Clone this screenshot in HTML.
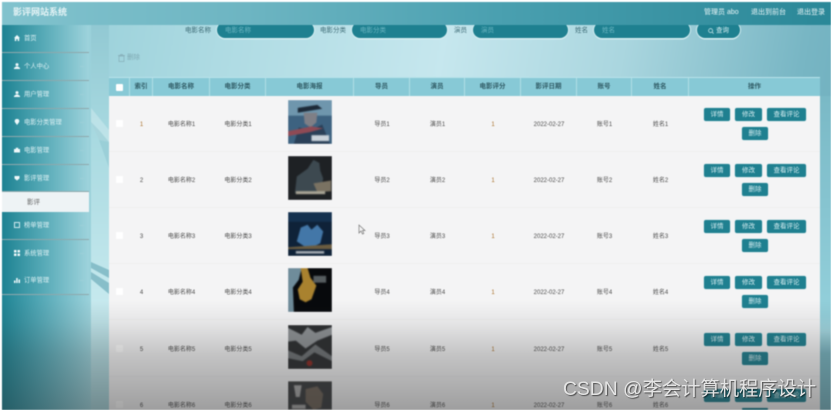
<!DOCTYPE html>
<html lang="zh"><head><meta charset="utf-8"><title>影评网站系统</title>
<style>
*{box-sizing:border-box;margin:0;padding:0}
html,body{width:831px;height:410px;overflow:hidden;background:#fff}
body{position:relative;font-family:"Liberation Sans","Noto Sans CJK SC",sans-serif;font-size:6.5px;color:#4a4a4a}
div,span{position:absolute}
svg{display:block}
#wrap{left:2px;top:2px;width:829px;height:408px;overflow:hidden;filter:blur(.45px)}
#app{left:-2px;top:-2px;width:831px;height:410px;overflow:hidden;background:linear-gradient(100deg,#8fcbd5 0%,#aedbe3 25%,#c6e7ee 50%,#aad6df 70%,#78b6c4 90%,#6cadbc 100%)}
#hd{left:0;top:0;width:831px;height:25px;background:linear-gradient(90deg,#82c3ce 0%,#6db5c2 30%,#4aa0b0 60%,#2b8898 100%)}
#hd span{color:#eaf6f8;white-space:nowrap;top:9px;font-size:7px;line-height:8px}
#hd .t{left:13px;top:7px;font-size:9px;line-height:11px;font-weight:bold;color:#e6f4f6}
.strip{left:91px;top:25px;width:18px;height:385px;background:linear-gradient(180deg,#92c9d3 0%,#a9dae1 30%,#c6e9ee 72%,#a5d3da 100%)}
.rs{left:820px;top:96px;width:11px;height:314px;background:linear-gradient(180deg,#7ab9c6 0%,#93d0db 70%,#a2d6df 75%,#79b6c2 82%,#79b6c2 100%)}
.sbg{left:2px;top:25px;width:89px;height:385px;background:linear-gradient(90deg,#1f8494 0%,#4fa5b3 40%,#9cd2db 100%)}
.mi{left:2px;width:87px;height:28px;border-bottom:1px solid #8fa8ac;color:#dff2f5;background:linear-gradient(90deg,#1d8292 0%,#53a8b5 45%,#9ed3dc 100%)}
.mi svg{position:absolute;left:12px;top:10px}
.mi .tx{left:22px;top:10px;white-space:nowrap;font-size:6.3px;line-height:8px}
.mi .ar{left:78px;top:12px;width:4px;height:2px;border-bottom:1px solid #9fd0d8;opacity:.8}
.sub{left:2px;top:192px;width:87px;height:20px;background:#eef3f5;color:#666}
.sub span{left:25px;top:7px;line-height:8px}
.lb{top:27px;color:#3c6a74;font-size:6.5px;line-height:8px;white-space:nowrap}
.pill{top:22px;height:16px;background:#1e8090;border-radius:8px;box-shadow:0 1.5px 0 #d5eef2,-1px 0 0 #d5eef2,1px 0 0 #d5eef2;color:#6cb6c2}
.pill i{font-style:normal;position:absolute;left:8px;top:5px;font-size:6.5px;line-height:8px;white-space:nowrap}
#del{left:118px;top:54px}
#delt{left:127px;top:54px;color:#7fa9b3;font-size:6.5px;line-height:8px}
#tb{left:109px;top:77px;width:711px;height:333px;background:#f4f4f5;overflow:hidden}
#th{left:0;top:0;width:711px;height:19px;background:#87c9d6;border-top:1px solid #b9e2ea}
#th span{top:0;height:18px;line-height:18px;text-align:center;font-weight:bold;color:#2f5a64;border-right:1px solid #b0dde5}
.c0{left:0;width:21px}.c1{left:21px;width:23px}.c2{left:44px;width:57px}.c3{left:101px;width:56px}.c4{left:157px;width:88px}.c5{left:245px;width:56px}.c6{left:301px;width:55px}.c7{left:356px;width:56px}.c8{left:412px;width:56px}.c9{left:468px;width:55px}.c10{left:523px;width:57px}.c11{left:580px;width:131px}
.r{left:0;width:711px;height:56px;border-bottom:1px solid #efefef;overflow:hidden}
.r span{top:24px;height:10px;line-height:10px;text-align:center;white-space:nowrap;font-size:6px}
.r .o{color:#a86f28}
.ck{left:7px;top:24px;width:7px;height:7px;background:#fff;border-radius:1px}
#th .ck2{left:7px;top:6px;width:7px;height:7px;background:#fff;border:0;border-radius:1px}
.p{left:179px;top:4px;width:44px;height:44px;overflow:hidden}
.p svg{filter:blur(.5px)}
.b{height:13px;background:#1f8090;color:#d5edf1;border-radius:2px;text-align:center;line-height:13px;box-shadow:0 0 1px #7fc3cf;font-size:6.5px;white-space:nowrap}
#shade{left:0;top:300px;width:831px;height:110px;background:linear-gradient(180deg,rgba(40,40,40,0) 0%,rgba(40,40,40,.07) 20%,rgba(40,40,40,.24) 50%,rgba(40,40,40,.42) 100%)}
#wm{left:563px;top:378px;font-size:19.3px;line-height:24px;color:#e4e4e4;white-space:nowrap;text-shadow:1px 1px 1px rgba(0,0,0,.55)}
</style></head><body>
<div id="wrap"><div id="app">

<div class="strip"></div>
<div class="rs"></div>
<svg style="position:absolute;left:91px;top:100px" width="18" height="200" viewBox="0 0 18 200">
<path d="M0 8L18 30V42L8 40L0 22z" fill="#dff2f5" opacity=".4"/>
<path d="M0 22L8 40L18 68V42L8 30z" fill="#7fbac6" opacity=".35"/>
<path d="M0 162L18 170V178L0 168z" fill="#78b4c0" opacity=".8"/>
<path d="M0 172L18 183V194L0 179z" fill="#78b4c0" opacity=".8"/>
</svg>

<div class="sbg"></div>
<div class="mi" style="top:25px"><svg width="6" height="6" viewBox="0 0 6 6"><path d="M0 3L3 0l3 3H5.200V6H3.700V4H2.300V6H.8V3z" fill="#eef8fa"/></svg><span class="tx">首页</span></div>
<div class="mi" style="top:53px"><svg width="6" height="6" viewBox="0 0 6 6"><circle cx="3" cy="1.600" r="1.500" fill="#eef8fa"/><path d="M0 6V5L2 3.500h2L6 5v1z" fill="#eef8fa"/></svg><span class="tx">个人中心</span><div class="ar"></div></div>
<div class="mi" style="top:81px"><svg width="6" height="6" viewBox="0 0 6 6"><circle cx="3" cy="1.600" r="1.500" fill="#eef8fa"/><path d="M0 6V5L2 3.500h2L6 5v1z" fill="#eef8fa"/></svg><span class="tx">用户管理</span><div class="ar"></div></div>
<div class="mi" style="top:109px"><svg width="6" height="6" viewBox="0 0 6 6"><path d="M3 6L1 3.200A2.300 2.300 0 1 1 5 3.200z" fill="#eef8fa"/></svg><span class="tx">电影分类管理</span><div class="ar"></div></div>
<div class="mi" style="top:137px"><svg width="6" height="6" viewBox="0 0 6 6"><path d="M0 2h1.800V.8h2.400V2H6v3.500H0z" fill="#eef8fa"/></svg><span class="tx">电影管理</span><div class="ar"></div></div>
<div class="mi" style="top:165px;height:27px"><svg width="6" height="6" viewBox="0 0 6 6"><path d="M.5 1h5v2.500L3 5.500.5 3.500z" fill="#eef8fa"/></svg><span class="tx">影评管理</span><div class="ar"></div></div>
<div class="sub"><span>影评</span></div>
<div class="mi" style="top:212px"><svg width="6" height="6" viewBox="0 0 6 6"><rect x=".5" y=".5" width="5" height="5" fill="none" stroke="#cfe9ee"/></svg><span class="tx">榜单管理</span><div class="ar"></div></div>
<div class="mi" style="top:240px"><svg width="6" height="6" viewBox="0 0 6 6"><path d="M0 0h2.500v2.500H0zM3.500 0H6v2.500H3.500zM0 3.500h2.500V6H0zM3.500 3.500H6V6H3.500z" fill="#eef8fa"/></svg><span class="tx">系统管理</span><div class="ar"></div></div>
<div class="mi" style="top:267px"><svg width="6" height="6" viewBox="0 0 6 6"><path d="M0 3.500h1.500V6H0zM2.200 1h1.500v5H2.200zM4.500 2.500H6V6H4.500z" fill="#eef8fa"/></svg><span class="tx">订单管理</span><div class="ar"></div></div>

<span class="lb" style="left:185px">电影名称</span><div class="pill" style="left:217px;width:97px"><i>电影名称</i></div>
<span class="lb" style="left:320px">电影分类</span><div class="pill" style="left:352px;width:95px"><i>电影分类</i></div>
<span class="lb" style="left:454px">演员</span><div class="pill" style="left:473px;width:95px"><i>演员</i></div>
<span class="lb" style="left:575px">姓名</span><div class="pill" style="left:594px;width:96px"><i>姓名</i></div>
<div class="pill" style="left:697px;width:43px;color:#d5edf1"><svg style="position:absolute;left:11px;top:6px" width="6" height="6" viewBox="0 0 6 6"><circle cx="2.600" cy="2.600" r="2" fill="none" stroke="#d5edf1" stroke-width=".7"/><path d="M4 4l1.600 1.600" stroke="#d5edf1" stroke-width=".7"/></svg><i style="left:19px">查询</i></div>

<div id="hd"><span class="t">影评网站系统</span><span style="left:704px">管理员 abo</span><span style="left:751px">退出到前台</span><span style="left:797px">退出登录</span></div>

<svg id="del" style="position:absolute" width="7" height="8" viewBox="0 0 7 8"><path d="M1 2h5v5.500H1zM0 1.500h7M2.500 1.500V.5h2v1" fill="none" stroke="#86aeb8" stroke-width=".7"/></svg><span id="delt">删除</span>

<div id="tb">
<div id="th"><span class="c0"><span class="ck2"></span></span><span class="c1">索引</span><span class="c2">电影名称</span><span class="c3">电影分类</span><span class="c4">电影海报</span><span class="c5">导员</span><span class="c6">演员</span><span class="c7">电影评分</span><span class="c8">影评日期</span><span class="c9">账号</span><span class="c10">姓名</span><span class="c11" style="border:0">操作</span></div>

<div class="r" style="top:19px"><div class="ck"></div><span class="c1 o">1</span><span class="c2">电影名称1</span><span class="c3">电影分类1</span>
<div class="p"><svg width="44" height="44" viewBox="0 0 45 45"><rect width="45" height="45" fill="#3d6280"/><path d="M0 0h45v16H0z" fill="#6f96ad"/><path d="M10 8l20-3 5 4-25 4z" fill="#1d2a38"/><path d="M16 13h14l-1 10-6 5-6-4z" fill="#7f7f86"/><path d="M6 45l5-17 12 3 12-6 8 20z" fill="#2a4058"/><path d="M0 32l24-5 12 2-14 4-22 4z" fill="#8f4a55"/><rect x="24" y="36" width="18" height="6" fill="#c9d2da"/></svg></div>
<span class="c5">导员1</span><span class="c6">演员1</span><span class="c7 o">1</span><span class="c8">2022-02-27</span><span class="c9">账号1</span><span class="c10">姓名1</span>
<div class="b" style="left:595px;top:12px;width:26px">详情</div><div class="b" style="left:626px;top:12px;width:27px">修改</div><div class="b" style="left:658px;top:12px;width:39px">查看评论</div><div class="b" style="left:633px;top:31px;width:26px">删除</div></div>

<div class="r" style="top:75px"><div class="ck"></div><span class="c1">2</span><span class="c2">电影名称2</span><span class="c3">电影分类2</span>
<div class="p"><svg width="44" height="44" viewBox="0 0 45 45"><rect width="45" height="45" fill="#1e2124"/><path d="M7 38l2-17 11-8 6-9 6 3 1 8 3 8-3 15z" fill="#3d4950"/><path d="M26 28l18-3v11l-14 1z" fill="#7a7262"/><rect x="8" y="36" width="30" height="3" fill="#a9a596"/></svg></div>
<span class="c5">导员2</span><span class="c6">演员2</span><span class="c7 o">1</span><span class="c8">2022-02-27</span><span class="c9">账号2</span><span class="c10">姓名2</span>
<div class="b" style="left:595px;top:12px;width:26px">详情</div><div class="b" style="left:626px;top:12px;width:27px">修改</div><div class="b" style="left:658px;top:12px;width:39px">查看评论</div><div class="b" style="left:633px;top:31px;width:26px">删除</div></div>

<div class="r" style="top:131px"><div class="ck"></div><span class="c1">3</span><span class="c2">电影名称3</span><span class="c3">电影分类3</span>
<div class="p"><svg width="44" height="44" viewBox="0 0 45 45"><rect width="45" height="45" fill="#0f2238"/><path d="M0 0h45v10H0z" fill="#14314f"/><path d="M9 30l4-14 7-3 4 5 6-5 6 7-3 12-12 6z" fill="#4377a8"/><path d="M0 36l45-3v5H0z" fill="#6b5c40"/><rect x="8" y="40" width="29" height="2.500" fill="#a9b0b6"/></svg></div>
<span class="c5">导员3</span><span class="c6">演员3</span><span class="c7 o">1</span><span class="c8">2022-02-27</span><span class="c9">账号3</span><span class="c10">姓名3</span>
<div class="b" style="left:595px;top:12px;width:26px">详情</div><div class="b" style="left:626px;top:12px;width:27px">修改</div><div class="b" style="left:658px;top:12px;width:39px">查看评论</div><div class="b" style="left:633px;top:31px;width:26px">删除</div></div>

<div class="r" style="top:187px"><div class="ck"></div><span class="c1">4</span><span class="c2">电影名称4</span><span class="c3">电影分类4</span>
<div class="p"><svg width="44" height="44" viewBox="0 0 45 45"><rect width="45" height="45" fill="#07090c"/><path d="M0 0h14l-3 12-6 8 1 25H0z" fill="#6f8c9a"/><path d="M13 0h7l3 10 6 8-5 14-6 3-6-3-2-10 5-8z" fill="#a9822f"/><rect x="26" y="8" width="13" height="7" fill="#565d60"/></svg></div>
<span class="c5">导员4</span><span class="c6">演员4</span><span class="c7 o">1</span><span class="c8">2022-02-27</span><span class="c9">账号4</span><span class="c10">姓名4</span>
<div class="b" style="left:595px;top:12px;width:26px">详情</div><div class="b" style="left:626px;top:12px;width:27px">修改</div><div class="b" style="left:658px;top:12px;width:39px">查看评论</div><div class="b" style="left:633px;top:31px;width:26px">删除</div></div>

<div class="r" style="top:244px"><div class="ck"></div><span class="c1">5</span><span class="c2">电影名称5</span><span class="c3">电影分类5</span>
<div class="p"><svg width="44" height="44" viewBox="0 0 45 45"><rect width="45" height="45" fill="#2c2e30"/><path d="M0 3l14 7 6-8 8 6 17-6v8L30 16 18 24 8 16 0 17z" fill="#8d9194"/><path d="M0 26l14 6 14-12 17 12v5L27 28l-12 9-15-3z" fill="#6f7376"/><circle cx="22" cy="39" r="3" fill="#8c2a24"/></svg></div>
<span class="c5">导员5</span><span class="c6">演员5</span><span class="c7 o">1</span><span class="c8">2022-02-27</span><span class="c9">账号5</span><span class="c10">姓名5</span>
<div class="b" style="left:595px;top:12px;width:26px">详情</div><div class="b" style="left:626px;top:12px;width:27px">修改</div><div class="b" style="left:658px;top:12px;width:39px">查看评论</div><div class="b" style="left:633px;top:31px;width:26px">删除</div></div>

<div class="r" style="top:300px;height:33px;border:0"><div class="ck"></div><span class="c1">6</span><span class="c2">电影名称6</span><span class="c3">电影分类6</span>
<div class="p" style="height:29px"><svg width="44" height="29" viewBox="0 0 45 29"><rect width="45" height="29" fill="#3b3d3f"/><path d="M18 8l12-3 6 8-2 14-8 2-8-8z" fill="#6f6459"/><path d="M6 4h8l-2 12H8zM4 24h14v4H4z" fill="#a9a9a9"/></svg></div>
<span class="c5">导员6</span><span class="c6">演员6</span><span class="c7 o">1</span><span class="c8">2022-02-27</span><span class="c9">账号6</span><span class="c10">姓名6</span>
<div class="b" style="left:595px;top:12px;width:26px">详情</div><div class="b" style="left:626px;top:12px;width:27px">修改</div><div class="b" style="left:658px;top:12px;width:39px">查看评论</div><div class="b" style="left:633px;top:31px;width:26px;height:2px;overflow:hidden"></div></div>
</div>

<svg style="position:absolute;left:358px;top:224px" width="8" height="11" viewBox="0 0 8 11"><path d="M1 1v8l2-2 1.500 3 1.300-.6L4.500 6.500H7z" fill="#f4f4f5" stroke="#777" stroke-width=".7"/></svg>
<div id="shade"></div>
</div></div>
<div id="wm">CSDN @李会计算机程序设计</div>
</body></html>
